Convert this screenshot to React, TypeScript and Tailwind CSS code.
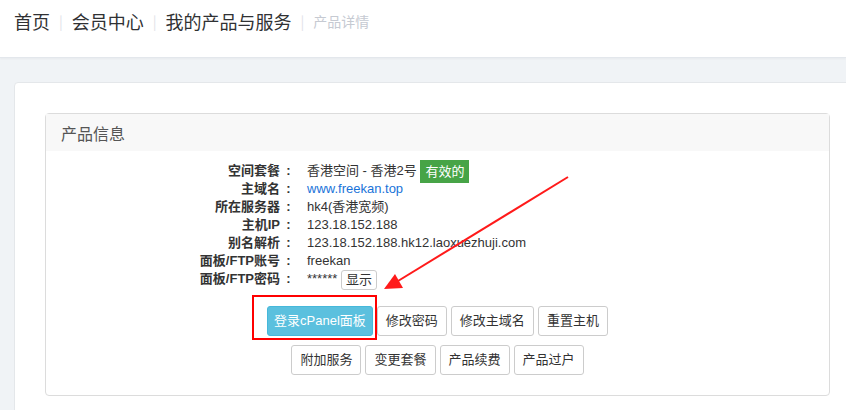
import React from 'react';

const INFO: { label: string; value: React.ReactNode }[] = [
  {
    label: '空间套餐',
    value: (
      <>
        香港空间 - 香港2号{' '}
        <span className="inline-block bg-[#47a447] text-white px-[5px] py-[3px] leading-[17px] text-[13px] align-middle -my-[4px]">有效的</span>
      </>
    ),
  },
  { label: '主域名', value: <a className="text-[#1a73d9]">www.freekan.top</a> },
  { label: '所在服务器', value: 'hk4(香港宽频)' },
  { label: '主机IP', value: '123.18.152.188' },
  { label: '别名解析', value: '123.18.152.188.hk12.laoxuezhuji.com' },
  { label: '面板/FTP账号', value: 'freekan' },
  {
    label: '面板/FTP密码',
    value: (
      <>
        ******{' '}
        <button className="inline-block border border-[#ccc] rounded-[3px] bg-white px-[4px] h-[20px] leading-[18px] text-[13px] text-[#333] align-middle">显示</button>
      </>
    ),
  },
];

const ROW1 = ['修改密码', '修改主域名', '重置主机'];
const ROW2 = ['附加服务', '变更套餐', '产品续费', '产品过户'];

function Btn({ children, primary }: { children: React.ReactNode; primary?: boolean; key?: React.Key }) {
  return (
    <button
      className={`h-[30px] rounded-[3px] border text-[13px] ${
        primary ? 'px-[6px] bg-[#5bc0de] border-[#46b8da] text-white' : 'px-[8px] bg-white border-[#ccc] text-[#333]'
      }`}
    >
      {children}
    </button>
  );
}

export default function App() {
  return (
    <div
      className="relative w-[846px] h-[410px] overflow-hidden bg-[#f0f3f6]"
      style={{ fontFamily: '"Liberation Sans", "Noto Sans CJK SC", sans-serif' }}
    >
      <div className="h-[58px] bg-white border-b border-[#e3e7ec] shadow-[0_1px_2px_rgba(0,0,0,0.04)] flex items-start pl-[14px] pt-[8px]">
        <div className="flex items-center text-[18px] leading-[26px] text-[#303133]" style={{ fontFamily: '"Noto Sans CJK SC", sans-serif' }}>
          <span>首页</span>
          <span className="mx-[9px] text-[14px] text-[#dfe2e8]">|</span>
          <span>会员中心</span>
          <span className="mx-[9px] text-[14px] text-[#dfe2e8]">|</span>
          <span>我的产品与服务</span>
          <span className="mx-[9px] text-[14px] text-[#dfe2e8]">|</span>
          <span className="text-[14px] text-[#c6cad2]">产品详情</span>
        </div>
      </div>

      <div className="ml-[14px] mt-[24px] w-[846px] bg-white border border-[#e4e7ea] rounded-[4px] p-[30px]">
        <div className="w-[785px] border border-[#dcdcdc] rounded-[4px] bg-white">
          <div className="h-[37px] bg-[#f8f8f8] pl-[15px] flex items-center text-[16px] text-[#555]" style={{ fontFamily: '"Noto Sans CJK SC", sans-serif' }}>
            产品信息
          </div>
          <div className="pt-[11px] pb-[20px] text-[13px] text-[#333]">
            <div className="grid grid-cols-[251px_1fr]">
              {INFO.map((row) => (
                <React.Fragment key={row.label}>
                  <div className="text-right font-bold leading-[18px] whitespace-nowrap">
                    {row.label}
                    <span className="inline-block w-[17px] text-center">:</span>
                  </div>
                  <div className="pl-[10px] leading-[18px] whitespace-nowrap">{row.value}</div>
                </React.Fragment>
              ))}
            </div>
            <div className="flex justify-center gap-[4px] mt-[16px]">
              <Btn primary>登录cPanel面板</Btn>
              {ROW1.map((b) => (
                <Btn key={b}>{b}</Btn>
              ))}
            </div>
            <div className="flex justify-center gap-[4px] mt-[9px]">
              {ROW2.map((b) => (
                <Btn key={b}>{b}</Btn>
              ))}
            </div>
          </div>
        </div>
      </div>

      <div className="absolute left-[252px] top-[295px] w-[125px] h-[45px] border-2 border-[#ff0000]" />
      <svg className="absolute left-0 top-0 pointer-events-none" width="846" height="410">
        <line x1="568" y1="177" x2="398" y2="281" stroke="#ff1a1a" strokeWidth="2" />
        <polygon points="384,289 395,274 403,288" fill="#ff1a1a" />
      </svg>
    </div>
  );
}
